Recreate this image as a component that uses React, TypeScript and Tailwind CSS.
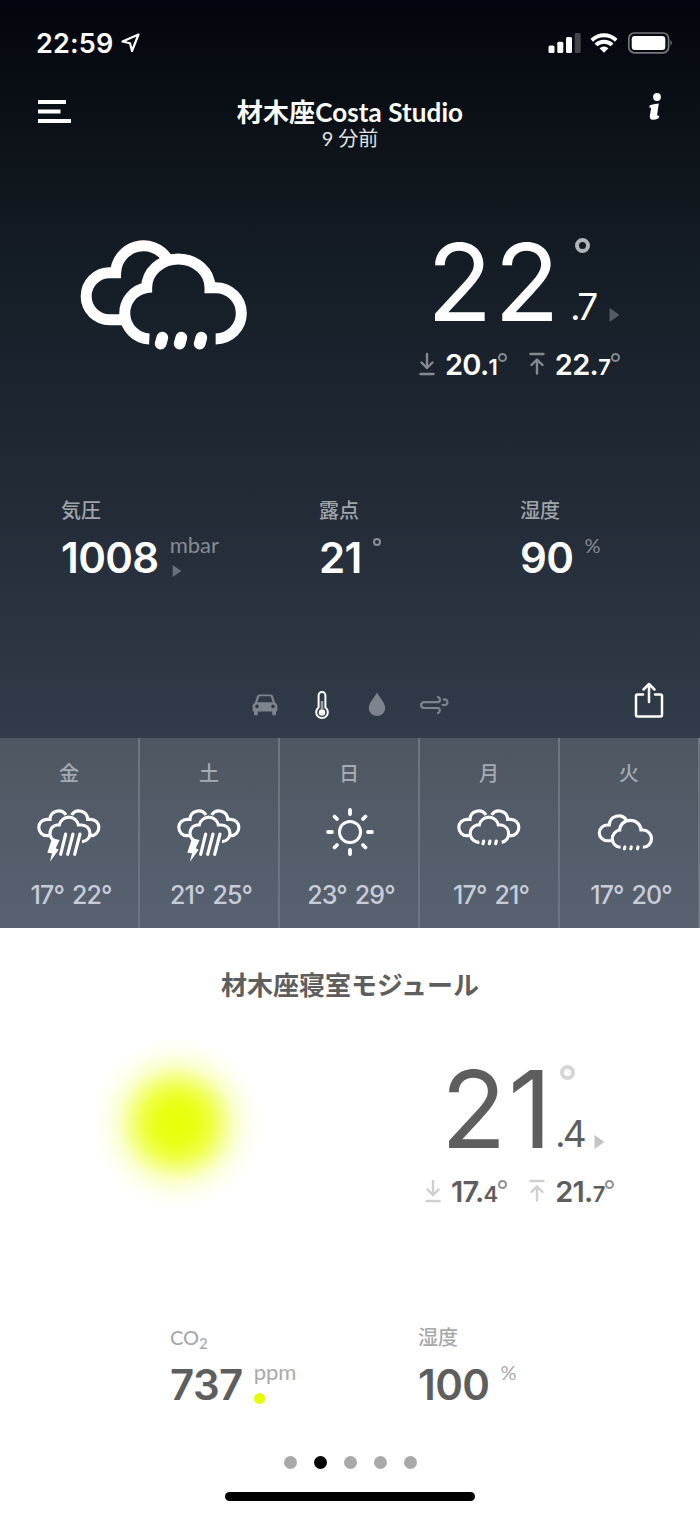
import type { ReactNode } from 'react';

type IconProps = { className?: string };

const letters = "font-['Lato','Noto_Sans_CJK_JP',sans-serif]";
const numbers = "font-['Inter','Noto_Sans_CJK_JP',sans-serif]";

// Two overlapping clouds with drizzle
function Drizzle({ className, weight, drop }: IconProps & { weight: number; drop: number }) {
  return (
    <svg viewBox="60 60 504 330" className={className} fill="none" stroke="currentColor" strokeWidth={weight}>
      <path d="M190 299H149A70.5 70.5 0 0 1 149 158H167A84 84 0 0 1 321 115" />
      <path d="M268 357A77.5 77.5 0 0 1 260 203A95 86 0 0 1 450 203H467A77 77 0 0 1 467 357" />
      <path d="M307 353L302 371M364 353L359 371M424 353L419 371" strokeWidth={drop} strokeLinecap="round" />
    </svg>
  );
}

function CloudPair() {
  return (
    <>
      <path d="M153 304H142A24.5 24.5 0 0 1 142 255H151A26 26 0 0 1 199 242" />
      <path d="M266 304H273A24.5 24.5 0 0 0 273 255H264A26 26 0 0 0 216 242" />
    </>
  );
}

function Storm({ className }: IconProps) {
  return (
    <svg viewBox="112 224 192 159" className={className} fill="none" stroke="currentColor" strokeWidth="9.5">
      <CloudPair />
      <path d="M163 318A25 25 0 0 1 172 272H179A29 29 0 0 1 236 272H245A25 25 0 0 1 247 322" />
      <path d="M198 299L183 360M220 299L204 360M241 299L225 360" strokeLinecap="round" />
      <path d="M157 312L180 317L168 342L177 346L151 382L157 357L143 355Z" fill="currentColor" stroke="none" />
    </svg>
  );
}

function Rain({ className }: IconProps) {
  return (
    <svg viewBox="112 224 192 159" className={className} fill="none" stroke="currentColor" strokeWidth="9.5">
      <CloudPair />
      <path d="M179 324A26.5 26.5 0 0 1 171 272H179A29 29 0 0 1 236 272H245A26.5 26.5 0 0 1 246 324" />
      <path d="M192 320L190 328M211 320L209 328M230 320L228 328" strokeLinecap="round" />
    </svg>
  );
}

function Sun({ className }: IconProps) {
  return (
    <svg viewBox="-25 -25 50 50" className={className} fill="none" stroke="currentColor" strokeLinecap="round">
      <circle r="10.6" strokeWidth="3" />
      <path
        d="M0-22V-18M0 22V18M-22 0H-18M22 0H18M-15.5-15.5L-13-13M15.5-15.5L13-13M-15.5 15.5L-13 13M15.5 15.5L13 13"
        strokeWidth="3.8"
      />
    </svg>
  );
}

function Arrow({ up, className }: IconProps & { up?: boolean }) {
  return (
    <svg viewBox="0 0 16 24" className={`w-4 h-6 ${className}`} fill="none" stroke="currentColor" strokeWidth="2.4" strokeLinecap="round" strokeLinejoin="round">
      {up ? <path d="M1.5 2H14.5M8 21.5V8M2.5 13L8 7.5L13.5 13" /> : <path d="M1.5 22H14.5M8 2V16M2.5 10.5L8 16L13.5 10.5" />}
    </svg>
  );
}

function Triangle({ className }: IconProps) {
  return (
    <svg viewBox="0 0 10 14" className={className} fill="currentColor">
      <path d="M0 0L10 7L0 14Z" />
    </svg>
  );
}

function Extreme({ whole, tenth, up, muted, ring }: { whole: string; tenth: string; up?: boolean; muted: string; ring: string }) {
  return (
    <div className="flex items-start">
      <Arrow up={up} className={muted} />
      <div className="ml-[10px] flex h-6 items-baseline leading-none">
        <span className="text-[29px] leading-[26px] font-semibold tracking-[-0.7px]">{whole}.</span>
        <span className="text-[22px] leading-[26px] font-semibold">{tenth}</span>
      </div>
      <span className={`mt-px size-[9px] rounded-full border-2 ${ring}`} />
    </div>
  );
}

interface ReadingProps {
  whole: string;
  tenth: string;
  width: string;
  muted: string;
  degree: string;
  children: ReactNode;
}

function Reading({ whole, tenth, width, muted, degree, children }: ReadingProps) {
  return (
    <div className={`flex flex-col ${numbers}`}>
      <div className="flex h-[98px]">
        <div className={`text-[107px] leading-none tracking-[2px] ${width}`}>{whole}</div>
        <div className="w-[38px]">
          <div className={`mt-[9px] ml-1 size-[15px] rounded-full border-4 ${degree}`} />
          <div className="mt-[35px] -ml-px text-[37px] leading-none tracking-[-3px]">{tenth}</div>
        </div>
        <Triangle className={`mt-[79px] h-[14px] w-[11px] ${muted}`} />
      </div>
      {children}
    </div>
  );
}

function Metric({ label, value, unit, extra, dark, className }: { label: ReactNode; value: string; unit: ReactNode; extra?: ReactNode; dark?: boolean; className?: string }) {
  return (
    <div className={className}>
      <div className={`h-[38px] pt-px text-[20px] leading-5 font-medium ${letters} ${dark ? 'text-[#a0a5ab]' : 'text-[#a9a9a9]'}`}>{label}</div>
      <div className="flex">
        <span className={`text-[42px] leading-[42px] font-semibold tracking-[-0.6px] ${numbers}`}>{value}</span>
        <div className={`-mt-[2px] ml-[11px] text-[22px] leading-5 ${letters} ${dark ? 'text-[#868c94]' : 'text-[#a9a9a9]'}`}>
          {unit}
          {extra}
        </div>
      </div>
    </div>
  );
}

const percent = <span className="text-[20px]">%</span>;

const days = [
  { day: '金', low: '17°', high: '22°', icon: <Storm className="h-[53px] w-16" />, iconRow: 'pt-4' },
  { day: '土', low: '21°', high: '25°', icon: <Storm className="h-[53px] w-16" />, iconRow: 'pt-4' },
  { day: '日', low: '23°', high: '29°', icon: <Sun className="size-[50px]" />, iconRow: 'pt-[14px] pl-px' },
  { day: '月', low: '17°', high: '21°', icon: <Rain className="h-[53px] w-16" />, iconRow: 'pt-4' },
  { day: '火', low: '17°', high: '20°', icon: <Drizzle weight={28} drop={27} className="h-[37px] w-[57px]" />, iconRow: 'pt-[21px] pr-2' },
];

function StatusBar() {
  return (
    <div className="flex h-[86px] items-center pr-[27px] pl-9">
      <span className="font-['Inter',sans-serif] text-[27px] leading-none font-semibold tracking-[0.2px]">22:59</span>
      <svg viewBox="0 0 20 20" className="ml-1.5 size-5" fill="none" stroke="currentColor" strokeWidth="2.2" strokeLinejoin="round">
        <path d="M18.5 1.5L2.5 8.5L10 10.2L12 18Z" />
      </svg>
      <svg viewBox="0 0 125 22" className="ml-auto h-[22px] w-[125px]" fill="currentColor">
        <rect x="0.5" y="13.5" width="6" height="7.5" rx="1.5" />
        <rect x="9.3" y="9.8" width="6" height="11.2" rx="1.5" />
        <rect x="18" y="5" width="6" height="16" rx="1.5" />
        <rect x="26.7" y="1" width="6" height="20" rx="1.5" opacity="0.25" />
        <path d="M42.5 6.8A19.5 19.5 0 0 1 69.5 6.8L67 9.7A16 16 0 0 0 45 9.7Z" />
        <path d="M46.6 11.4A14 14 0 0 1 65.4 11.4L62.7 14.3A10 10 0 0 0 49.3 14.3Z" />
        <path d="M51.5 16.2A7 7 0 0 1 60.5 16.2L56 20.8Z" />
        <rect x="80.8" y="1" width="39.8" height="19.8" rx="5.5" fill="none" stroke="currentColor" strokeWidth="1.7" opacity="0.45" />
        <rect x="83.7" y="4" width="33.6" height="14" rx="3.2" />
        <path d="M122.5 7.8Q125 10.8 122.5 13.8Z" opacity="0.5" />
      </svg>
    </div>
  );
}

function Header() {
  return (
    <header className="flex h-20 items-start">
      <svg viewBox="0 0 33 24" className="mt-[14px] ml-[38px] h-6 w-[33px]" fill="currentColor">
        <path d="M0 0H28V4H0ZM0 9.5H22.5V13.5H0ZM0 19H33V23H0Z" />
      </svg>
      <div className={`flex-1 text-center ${letters}`}>
        <h1 className="mt-3 text-[26px] leading-[28px] font-bold tracking-[0.1px]">材木座Costa Studio</h1>
        <p className="mt-0.5 text-[20px] leading-5 text-[#e0e1e4]">9 分前</p>
      </div>
      <svg viewBox="0 0 14 28" className="mt-[7px] mr-[38px] ml-[19px] h-7 w-[14px]" fill="currentColor">
        <circle cx="9" cy="4" r="3.9" />
        <path d="M1.8 12.3Q5 11 10.8 10.6L9.2 21.5Q9 23.4 11.4 22.4L10.6 25.2Q7 27.2 4 26.8Q1.3 26.2 1.9 22.6L3 15.8Q3.2 14 1.2 14.6Z" />
      </svg>
    </header>
  );
}

function Toolbar() {
  return (
    <div className="flex h-[68px] items-start text-[#7e848e]">
      <svg viewBox="0 0 26 22" className="mt-6 ml-[252px] h-[22px] w-[26px]" fill="currentColor" fillRule="evenodd">
        <path d="M7 0.5H19Q20.5 0.5 21 2L23 8.5Q25.4 9.5 25.4 12V16.5Q25.4 17.5 24.4 17.5H24V20Q24 21.5 22.2 21.5T20.2 20V17.5H5.8V20Q5.8 21.5 4 21.5T2 20V17.5H1.6Q.6 17.5 .6 16.5V12Q.6 9.5 3 8.5L5 2Q5.5.5 7 .5ZM7.4 2.3L5.3 8.2H20.7L18.6 2.3ZM5 10.6A1.8 1.8 0 1 0 5 14.2A1.8 1.8 0 1 0 5 10.6ZM21 10.6A1.8 1.8 0 1 0 21 14.2A1.8 1.8 0 1 0 21 10.6Z" />
      </svg>
      <svg viewBox="0 0 14 29" className="mt-[21px] ml-[37px] h-[29px] w-[14px] text-white" fill="none" stroke="currentColor" strokeWidth="2">
        <path d="M3.6 16.5V4.3A3.4 3.4 0 0 1 10.4 4.3V16.5A5.8 5.8 0 1 1 3.6 16.5Z" />
        <path d="M7 10V18" stroke="#9a9fa6" strokeWidth="2.6" />
        <circle cx="7" cy="21.5" r="3.2" fill="currentColor" stroke="none" />
      </svg>
      <svg viewBox="0 0 18 24" className="mt-[22px] ml-[39px] h-6 w-[18px]" fill="currentColor">
        <path d="M9 .5C7 5 .8 10.5 .8 16A8.2 8 0 0 0 17.2 16C17.2 10.5 11 5 9 .5Z" />
      </svg>
      <svg viewBox="0 0 30 20" className="mt-[25px] ml-[34px] h-5 w-[30px]" fill="none" stroke="currentColor" strokeWidth="2.2" strokeLinecap="round">
        <path d="M18 2A2.8 2.8 0 0 1 18.5 7.2H4A2.9 2.9 0 0 0 4 13H18.5A2.8 2.8 0 0 1 18 18" />
        <path d="M23.8 4.6A2.8 2.8 0 1 1 25.5 10H22.5" />
      </svg>
      <svg viewBox="0 0 30 36" className="mt-3 ml-[184px] h-9 w-[30px] text-white" fill="none" stroke="currentColor" strokeWidth="2.5" strokeLinecap="round" strokeLinejoin="round">
        <path d="M9 12.5H3.5Q2 12.5 2 14V33Q2 34.5 3.5 34.5H26.5Q28 34.5 28 33V14Q28 12.5 26.5 12.5H21" />
        <path d="M15 20V2.5M9.5 7.5L15 2L20.5 7.5" />
      </svg>
    </div>
  );
}

export default function App() {
  return (
    <div className="flex h-[1516px] w-[700px] flex-col overflow-hidden bg-white whitespace-nowrap">
      {/* Outdoor station */}
      <section className="h-[738px] bg-[linear-gradient(#03040d_0%,#0e151a_22%,#151d27_38%,#232b37_68%,#323b49_100%)] text-white">
        <StatusBar />
        <Header />
        <div className="flex h-[333px] items-start">
          <Drizzle weight={33} drop={35} className="mt-[74px] ml-20 h-[110px] w-[168px]" />
          <div className="mt-[63px] ml-[179px]">
            <Reading whole="22" tenth=".7" width="w-[144px]" muted="text-[#555b64]" degree="border-[#b0b3b8]">
              <div className="mt-[25px] -ml-2 flex gap-[22px]">
                <Extreme whole="20" tenth="1" muted="text-[#858a91]" ring="border-[#858a91]" />
                <Extreme up whole="22" tenth="7" muted="text-[#858a91]" ring="border-[#858a91]" />
              </div>
            </Reading>
          </div>
        </div>
        <div className="flex h-[171px] items-start pl-[61px]">
          <Metric
            dark
            label="気圧"
            value="1008"
            unit="mbar"
            extra={<Triangle className="mt-[10px] ml-0.5 h-3 w-[10px] text-[#69717b]" />}
            className="w-[258px]"
          />
          <Metric dark label="露点" value="21" unit={<div className="mt-[3px] size-2 rounded-full border-2 border-[#8b9098]" />} className="w-[201px]" />
          <Metric dark label="湿度" value="90" unit={percent} />
        </div>
        <Toolbar />
      </section>

      {/* Five day forecast */}
      <section className="flex h-[190px] bg-linear-to-b from-[#4e5761] to-[#586170]">
        {days.map((item) => (
          <div key={item.day} className="flex w-[140px] flex-col items-center border-r-2 border-[#6c7580]">
            <div className={`mt-[25px] text-[20px] leading-5 font-medium text-[#a5abb4] ${letters}`}>{item.day}</div>
            <div className="flex h-[92px] items-start pt-[10px] text-white">
              <div className={item.iconRow}>{item.icon}</div>
            </div>
            <div className={`mt-2 flex gap-2 pl-1 text-[25px] leading-[25px] font-medium tracking-[-0.9px] text-[#c8ccd8] ${numbers}`}>
              <span>{item.low}</span>
              <span>{item.high}</span>
            </div>
          </div>
        ))}
      </section>

      {/* Bedroom module */}
      <section className="flex flex-1 flex-col text-[#5e5e5e]">
        <h2 className={`mt-[43px] h-7 text-center text-[26px] leading-7 font-bold ${letters}`}>材木座寝室モジュール</h2>
        <div className="flex h-[327px] items-start">
          <div className="mt-[34px] ml-[87px] size-[180px] bg-[radial-gradient(closest-side,#e7ff08_0%,#e9ff16_22%,#efff45_38%,#f5ff8c_52%,#fbffcd_65%,#fefff0_80%,#ffffff_95%)]" />
          <div className="mt-[57px] ml-[174px]">
            <Reading whole="21" tenth=".4" width="w-[115px]" muted="text-[#c5c5c5]" degree="border-[#d6d6d6]">
              <div className="mt-[25px] -ml-4 flex gap-[22px]">
                <Extreme whole="17" tenth="4" muted="text-[#cfcfcf]" ring="border-[#8e8e8e]" />
                <Extreme up whole="21" tenth="7" muted="text-[#cfcfcf]" ring="border-[#8e8e8e]" />
              </div>
            </Reading>
          </div>
        </div>
        <div className="flex h-[130px] items-start pl-[170px]">
          <Metric
            label={
              <>
                CO<sub className="text-[15px]">2</sub>
              </>
            }
            value="737"
            unit="ppm"
            extra={<div className="mt-[11px] size-[11px] rounded-full bg-[#e6ff00]" />}
            className="w-[248px]"
          />
          <Metric label="湿度" value="100" unit={percent} />
        </div>
        <div className="flex justify-center gap-[17px]">
          {[0, 1, 2, 3, 4].map((page) => (
            <span key={page} className={`size-[13px] rounded-full ${page === 1 ? 'bg-black' : 'bg-[#a9a9a9]'}`} />
          ))}
        </div>
        <div className="mt-[23px] h-[9px] w-[250px] self-center rounded-full bg-black" />
      </section>
    </div>
  );
}
